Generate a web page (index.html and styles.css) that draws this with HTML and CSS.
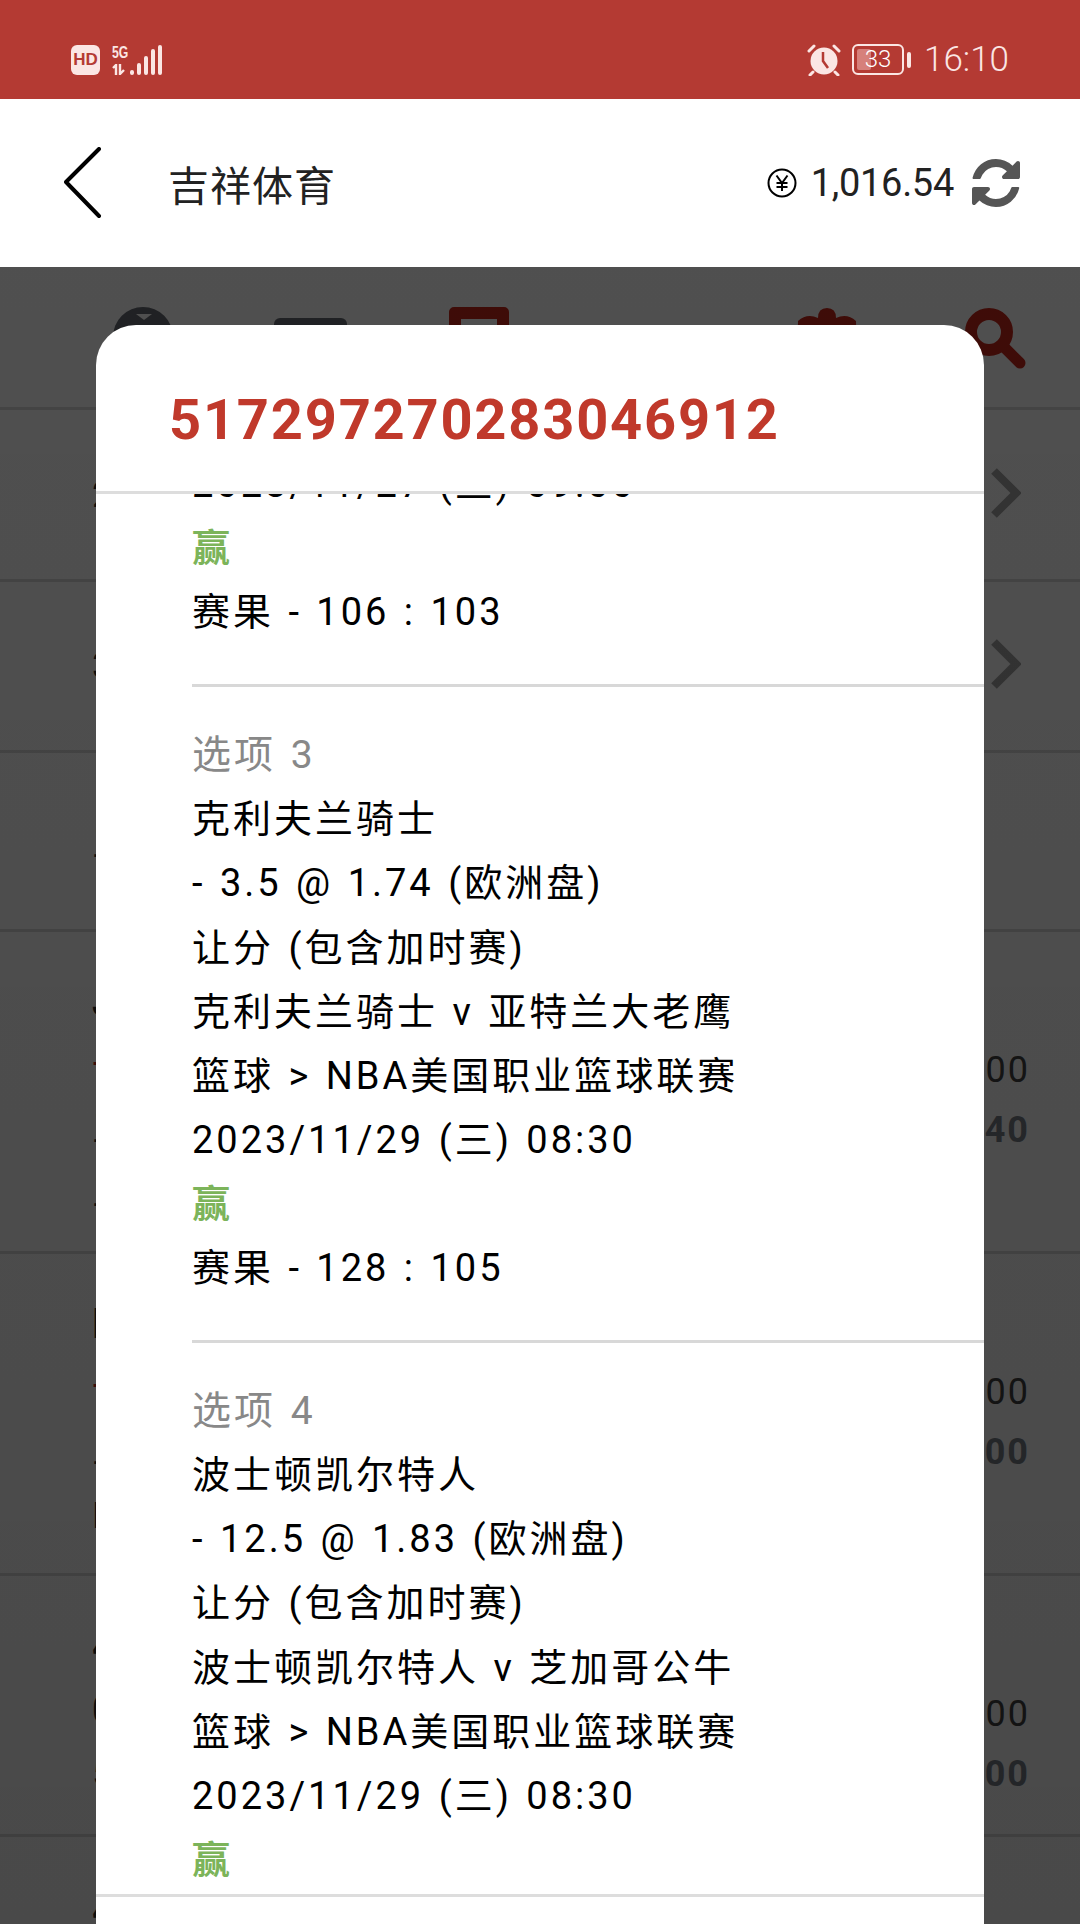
FILE: index.html
```html
<!DOCTYPE html>
<html lang="zh-CN">
<head>
    <meta charset="UTF-8">
    <meta name="viewport" content="width=device-width, initial-scale=1.0">
    <title>吉祥体育</title>
    <link rel="stylesheet" href="styles.css">
</head>
<body>
    <div class="status-bar">
        <div class="status-left">
            <span class="hd-badge">HD</span>
            <div class="signal-text">
                <span class="five-g">5G</span>
                <svg class="arrows" width="17" height="11" viewBox="0 0 17 11"><path d="M1 4 L4 1 V11 M8 0 V10 L12 6" fill="none" stroke="#fbe6e4" stroke-width="2.4"/></svg>
            </div>
            <div class="signal-bars">
                <i class="bar1"></i><i class="bar2"></i><i class="bar3"></i><i class="bar4"></i><i class="bar5"></i>
            </div>
        </div>
        <div class="status-right">
            <svg width="34" height="32" viewBox="0 0 34 32">
                <circle cx="17" cy="17" r="13.500" fill="#fbe6e4"/>
                <path d="M16 8 V17 L21 24" fill="none" stroke="#b43a33" stroke-width="2.5"/>
                <path d="M2 7 L7 2 M32 7 L27 2 M6 28 L3 31 M28 28 L31 31" fill="none" stroke="#fbe6e4" stroke-width="3" stroke-linecap="round"/>
            </svg>
            <div class="battery">
                <div class="battery-body"><span class="battery-fill"></span><span class="battery-num">33</span></div>
                <span class="battery-tip"></span>
            </div>
            <span class="clock">16:10</span>
        </div>
    </div>

    <header class="app-header">
        <svg class="back-icon" width="38" height="72" viewBox="0 0 38 72"><path d="M35 2 L2 35 L35 69" fill="none" stroke="#000" stroke-width="4" stroke-linecap="round" stroke-linejoin="round"/></svg>
        <h1 class="app-title">吉祥体育</h1>
        <div class="balance">
            <svg width="30" height="30" viewBox="0 0 30 30">
                <circle cx="15" cy="15" r="13.5" fill="none" stroke="#000" stroke-width="2"/>
                <path d="M9.5 7.5 L15 15 L20.500 7.500 M15 15 V23 M9.500 15 H20.500 M9.500 19 H20.500" fill="none" stroke="#000" stroke-width="2"/>
            </svg>
            <span class="balance-num">1,016.54</span>
            <svg class="refresh-icon" width="48" height="48" viewBox="128 128 1536 1536"><path fill="#555" d="M1639 1056q0 5-1 7-64 268-268 434.5t-478 166.5q-146 0-282.5-55t-243.5-157l-129 129q-19 19-45 19t-45-19-19-45v-448q0-26 19-45t45-19h448q26 0 45 19t19 45-19 45l-137 137q71 66 161 102t187 36q134 0 250-65t186-179q11-17 53-117 8-23 30-23h192q13 0 22.5 9.5t9.5 22.5zm25-800v448q0 26-19 45t-45 19h-448q-26 0-45-19t-19-45 19-45l138-138q-148-137-349-137-134 0-250 65t-186 179q-11 17-53 117-8 23-30 23h-199q-13 0-22.5-9.5t-9.5-22.5v-7q65-268 270-434.5t480-166.5q146 0 284 55.5t245 156.5l130-129q19-19 45-19t45 19 19 45z"/></svg>
        </div>
    </header>

    <main class="page">
        <div class="tool-row">
            <svg class="tool tool-globe" width="60" height="60" viewBox="0 0 60 60"><circle cx="30" cy="30" r="30" fill="#4f5359"/><path d="M23 7 H39 L31 13 Z" fill="#c6c6c6"/></svg>
            <span class="tool tool-doc"></span>
            <span class="tool tool-save"></span>
            <svg class="tool tool-gear" width="60" height="60" viewBox="0 0 60 60"><path fill="#9c1e14" d="M21 10 Q21 0 30 0 Q39 0 39 10 Q50 5 59 13 L60 60 H0 L1 13 Q10 5 21 10 Z"/></svg>
            <svg class="tool tool-search" width="62" height="62" viewBox="0 0 62 62"><circle cx="24" cy="24" r="18" fill="none" stroke="#9c1e14" stroke-width="12"/><path d="M38 38 L55 55" stroke="#9c1e14" stroke-width="11" stroke-linecap="round"/></svg>
        </div>
        <div class="row row-a"><span class="row-text">2</span><svg class="chevron" width="30" height="50" viewBox="0 0 30 50"><path d="M3 3 L25 25 L3 47" fill="none" stroke="#808080" stroke-width="8"/></svg></div>
        <div class="row row-a"><span class="row-text">3</span><svg class="chevron" width="30" height="50" viewBox="0 0 30 50"><path d="M3 3 L25 25 L3 47" fill="none" stroke="#808080" stroke-width="8"/></svg></div>
        <div class="row row-b"><span class="row-text">三</span></div>
        <div class="row row-bet">
            <div class="bet-left"><b>J</b><span class="red">一</span><span>三</span><span>三</span></div>
            <div class="bet-right"><span>100</span><b>140</b></div>
        </div>
        <div class="row row-bet">
            <div class="bet-left"><b>D</b><span class="red">一</span><span>三</span><span>D</span></div>
            <div class="bet-right"><span>100</span><b>200</b></div>
        </div>
        <div class="row row-bet row-short">
            <div class="bet-left"><b>4</b><b>0</b><span>5</span></div>
            <div class="bet-right"><span>100</span><b>200</b></div>
        </div>
        <div class="row row-last"><b>4</b></div>
    </main>

    <div class="overlay"></div>

    <section class="modal">
        <h2 class="modal-title">517297270283046912</h2>
        <div class="modal-body">
            <div class="option option-cut">
                <p>2023/11/27 (三) 09:00</p>
                <p class="win">赢</p>
                <p>赛果 - 106 : 103</p>
            </div>
            <div class="option">
                <p class="option-label">选项 3</p>
                <p>克利夫兰骑士</p>
                <p>- 3.5 @ 1.74 (欧洲盘)</p>
                <p>让分 (包含加时赛)</p>
                <p>克利夫兰骑士 v 亚特兰大老鹰</p>
                <p>篮球 &gt; NBA美国职业篮球联赛</p>
                <p>2023/11/29 (三) 08:30</p>
                <p class="win">赢</p>
                <p>赛果 - 128 : 105</p>
            </div>
            <div class="option">
                <p class="option-label">选项 4</p>
                <p>波士顿凯尔特人</p>
                <p>- 12.5 @ 1.83 (欧洲盘)</p>
                <p>让分 (包含加时赛)</p>
                <p>波士顿凯尔特人 v 芝加哥公牛</p>
                <p>篮球 &gt; NBA美国职业篮球联赛</p>
                <p>2023/11/29 (三) 08:30</p>
                <p class="win">赢</p>
            </div>
        </div>
        <div class="modal-foot"></div>
    </section>
</body>
</html>
```

FILE: styles.css
```css
* { box-sizing: border-box; }
html, body { margin: 0; padding: 0; }
body {
    width: 1080px;
    height: 1924px;
    position: relative;
    overflow: hidden;
    font-family: Roboto, "Noto Sans CJK SC", sans-serif;
    background: #c6c6c6;
}

.status-bar {
    height: 99px;
    background: #b43a33;
    color: #fbe6e4;
    display: flex;
    justify-content: space-between;
    align-items: center;
    padding: 20px 71px 0;
}
.status-left, .status-right { display: flex; align-items: center; }
.hd-badge {
    width: 29px;
    height: 30px;
    border-radius: 6px;
    background: #fbe6e4;
    color: #b43a33;
    font: 700 17px/30px "Liberation Sans", sans-serif;
    text-align: center;
    margin-right: 12px;
}
.signal-text { width: 18px; display: flex; flex-direction: column; }
.five-g { font: 700 17px/15px "Liberation Sans", sans-serif; transform: scaleX(.72); transform-origin: left; }
.arrows { margin-top: 4px; }
.signal-bars { display: flex; align-items: flex-end; gap: 3px; height: 30px; }
.signal-bars i { width: 4px; background: #fbe6e4; border-radius: 2px; display: block; }
.bar1 { height: 5px; }
.bar2 { height: 12px; }
.bar3 { height: 19px; }
.bar4 { height: 26px; }
.bar5 { height: 30px; }

.status-right svg { margin-right: 11px; }
.battery { display: flex; align-items: center; }
.battery-body {
    width: 52px;
    height: 31px;
    border: 2px solid #fbe6e4;
    border-radius: 6px;
    position: relative;
}
.battery-fill {
    position: absolute;
    left: 3px;
    top: 3px;
    bottom: 3px;
    width: 14px;
    border-radius: 2px;
    background: #d6807b;
}
.battery-num {
    position: absolute;
    left: 0;
    right: 0;
    top: 0;
    text-align: center;
    font-size: 24px;
    line-height: 27px;
    font-weight: 300;
    color: #fff;
}
.battery-tip { width: 4px; height: 16px; background: #fbe6e4; border-radius: 2px; margin-left: 3px; }
.clock { font-size: 35px; font-weight: 300; margin-left: 13px; }

.app-header {
    height: 168px;
    background: #fff;
    display: flex;
    align-items: center;
    padding: 0 60px 0 64px;
    color: #222;
}
.back-icon { margin-right: 66px; }
.app-title { margin: 0; font-size: 41px; font-weight: 400; letter-spacing: 1px; }
.balance { margin-left: auto; display: flex; align-items: center; }
.balance-num { font-size: 38px; margin: 0 18px 0 14px; letter-spacing: -.3px; }

.page { height: 1657px; overflow: hidden; }
.tool-row { height: 143px; border-bottom: 3px solid #aaa; position: relative; }
.tool { position: absolute; top: 41px; }
.tool-globe { left: 113px; top: 40px; }
.tool-doc { left: 274px; top: 51px; width: 73px; height: 40px; background: #4f5359; border-radius: 6px; }
.tool-save { left: 449px; top: 40px; width: 60px; height: 50px; border: 12px solid #9c1e14; border-radius: 5px; }
.tool-gear { left: 797px; }
.tool-search { left: 965px; }

.row {
    height: 172px;
    border-bottom: 3px solid #aaa;
    display: flex;
    align-items: center;
    justify-content: space-between;
    padding: 0 50px 0 92px;
    font-size: 36px;
    color: #222;
}
.row-a:nth-child(3) { height: 171px; }
.row-b { height: 179px; }
.chevron { flex: none; margin-right: 9px; margin-bottom: 4px; }
.row-bet { height: 322px; align-items: flex-start; padding-top: 44px; }
.row-short { height: 261px; }
.row-last { align-items: flex-start; padding-top: 48px; font-size: 42px; }
.bet-left, .bet-right { display: flex; flex-direction: column; }
.bet-left { gap: 12px; line-height: 52px; }
.bet-left b { font-size: 42px; }
.bet-left .red { color: #9c1e14; }
.bet-right { text-align: right; padding-top: 73px; gap: 18px; font-size: 36px; line-height: 42px; letter-spacing: 2px; color: #333; }
.bet-right b { color: #5f646b; }

.overlay {
    position: absolute;
    left: 0;
    right: 0;
    top: 267px;
    bottom: 0;
    background: linear-gradient(rgba(0, 0, 0, .6), rgba(0, 0, 0, .63));
}

.modal {
    position: absolute;
    left: 96px;
    top: 325px;
    width: 888px;
    bottom: 0;
    background: #fff;
    border-radius: 40px 40px 0 0;
    display: flex;
    flex-direction: column;
    overflow: hidden;
}
.modal-title {
    height: 169px;
    flex: none;
    margin: 0;
    padding: 0 0 0 73px;
    font-size: 56px;
    line-height: 191px;
    font-weight: 700;
    color: #c0392b;
    letter-spacing: 1.8px;
    border-bottom: 3px solid #ddd;
}
.modal-body { flex: 1; overflow: hidden; padding-left: 96px; }
.modal-foot { height: 30px; flex: none; border-top: 3px solid #ddd; }

.option {
    border-bottom: 3px solid #d8d8d8;
    padding: 36px 0 40px;
    font-size: 38px;
    line-height: 64.1px;
    color: #000;
    letter-spacing: 3px;
    word-spacing: 2px;
}
.option p { margin: 0; white-space: nowrap; }
.option-cut { margin-top: -42px; padding-top: 0; }
.option .option-label { color: #888; font-size: 39px; }
.option .win { color: #7cb45a; font-weight: 700; }
```
